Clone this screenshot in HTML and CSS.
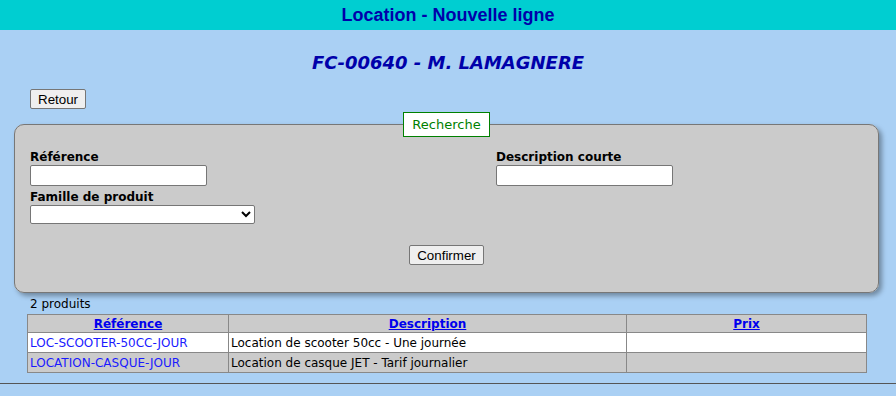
FILE: index.html
```html
<!DOCTYPE html>
<html lang="fr">
<head>
    <meta charset="UTF-8">
    <title>Location - Nouvelle ligne</title>
    <link rel="stylesheet" href="styles.css">
</head>
<body>
<div class="topbar">Location - Nouvelle ligne</div>

<h2 class="client">FC-00640 - M. LAMAGNERE</h2>

<div class="actions">
    <button class="btn">Retour</button>
</div>

<!-- Recherche -->
<fieldset class="search">
    <legend>Recherche</legend>
    <div class="fields">
        <div class="field">
            <label>Référence</label>
            <input type="text" class="txt">
        </div>
        <div class="field">
            <label>Description courte</label>
            <input type="text" class="txt">
        </div>
        <div class="field">
            <label>Famille de produit</label>
            <select class="sel"><option></option></select>
        </div>
    </div>
    <div class="submit">
        <button class="btn">Confirmer</button>
    </div>
</fieldset>

<div class="count">2 produits</div>
<table class="results">
    <thead>
        <tr>
            <th class="c-ref"><a href="#">Référence</a></th>
            <th class="c-desc"><a href="#">Description</a></th>
            <th><a href="#">Prix</a></th>
        </tr>
    </thead>
    <tbody>
        <tr class="odd">
            <td><a href="#">LOC-SCOOTER-50CC-JOUR</a></td>
            <td>Location de scooter 50cc - Une journée</td>
            <td></td>
        </tr>
        <tr class="even">
            <td><a href="#">LOCATION-CASQUE-JOUR</a></td>
            <td>Location de casque JET - Tarif journalier</td>
            <td></td>
        </tr>
    </tbody>
</table>
<hr class="sep">
</body>
</html>
```

FILE: styles.css
```css
body {
    margin: 0;
    background: #aad0f4;
    font-family: "DejaVu Sans", Verdana, sans-serif;
    font-size: 12px;
    color: #000;
}
.topbar {
    height: 30px;
    line-height: 30px;
    background: #00ced1;
    color: #0000aa;
    text-align: center;
    font-family: "Liberation Sans", Arial, sans-serif;
    font-weight: bold;
    font-size: 18px;
}
.client {
    margin: 20px 0 0;
    height: 26px;
    line-height: 26px;
    text-align: center;
    color: #0000aa;
    font-size: 18px;
    font-style: italic;
    font-weight: bold;
}
.actions {
    padding: 13px 30px 0;
    height: 20px;
}
.btn {
    font-family: "Liberation Sans", Arial, sans-serif;
    font-size: 13.33px;
    height: 20px;
    padding: 0 7px;
    background: #efefef;
    border: 1px solid #767676;
    border-radius: 2px;
    color: #000;
}
.search {
    margin: 3px 17px 0 14px;
    padding: 13px 15px 27px;
    background: #cbcbcb;
    border: 1px solid #777;
    border-radius: 10px;
    box-shadow: 3px 3px 5px rgba(0, 0, 0, 0.35);
}
.search legend {
    margin: 0 auto;
    padding: 4px 8px;
    background: #fff;
    border: 1px solid #008000;
    color: #008000;
    font-size: 13px;
}
.fields {
    display: grid;
    grid-template-columns: 466px 1fr;
    row-gap: 4px;
}
.field label {
    display: block;
    font-weight: bold;
    font-size: 12px;
    line-height: 15px;
}
.txt {
    display: block;
    width: 177px;
    height: 21px;
    box-sizing: border-box;
    margin: 0;
    border: 1px solid #767676;
    border-radius: 2px;
    background: #fff;
}
.sel {
    display: block;
    width: 225px;
    height: 19px;
    box-sizing: border-box;
    margin: 0;
    border: 1px solid #767676;
    border-radius: 2px;
    background: #fff;
}
.submit {
    text-align: center;
    margin-top: 21px;
}
.count {
    margin: 4px 0 0 30px;
    line-height: 15px;
}
.results {
    margin: 2px 0 0 27px;
    width: 840px;
    border-collapse: collapse;
    border: 1px solid #888;
}
.results th, .results td {
    border: 1px solid #888;
    padding: 0 2px;
    height: 19px;
    line-height: 16px;
    text-align: left;
}
.results th {
    background: #cbcbcb;
    text-align: center;
    height: 17px;
}
.results th a {
    color: #0000ee;
    font-weight: bold;
}
.results td a {
    color: #1a1aff;
    text-decoration: none;
}
.c-ref { width: 196px; }
.c-desc { width: 393px; }
.odd td { background: #fff; }
.even td { background: #cbcbcb; }
.sep {
    margin: 10px 0 0;
    border: 0;
    border-top: 1px solid #555;
}
```
